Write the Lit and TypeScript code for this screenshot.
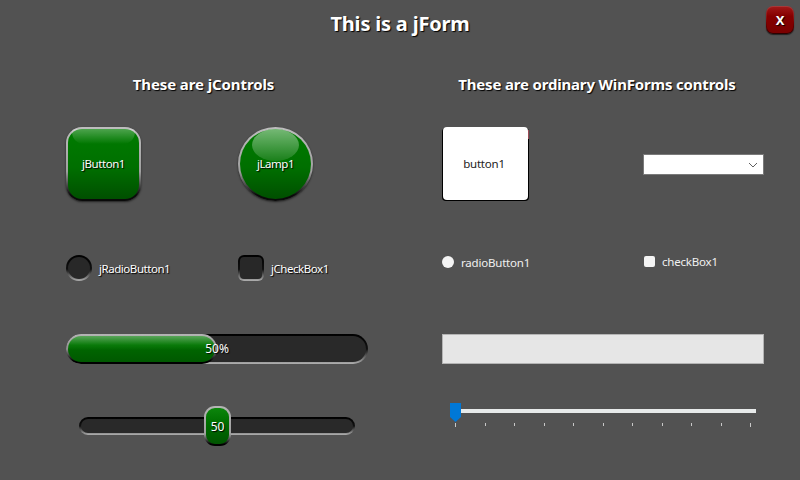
import { css, html, LitElement } from "lit";
import { customElement } from "lit/decorators.js";

const TICKS = 11;

@customElement("app-root")
export class AppRoot extends LitElement {
  static styles = css`
    :host {
      display: block;
      width: 800px;
      height: 480px;
      overflow: hidden;
      background: #525252;
      color: #fff;
      font-family: "Noto Sans", "Open Sans", sans-serif;
      font-size: 11.5px;
    }

    .form {
      position: relative;
      height: 480px;
    }

    .title {
      height: 74px;
      padding-top: 10px;
      box-sizing: border-box;
      text-align: center;
      font-size: 20px;
      font-weight: 700;
      letter-spacing: -0.2px;
      line-height: 28px;
      text-shadow: 1px 1px 1px #000;
    }

    .close {
      position: absolute;
      top: 6px;
      left: 766px;
      width: 28px;
      height: 28px;
      box-sizing: border-box;
      padding: 1px;
      border-radius: 7px;
      background: linear-gradient(#a83a3a, #7a0000 60%, #2a0000);
      box-shadow: 0 1px 1px #222;
    }

    .close span {
      display: flex;
      align-items: center;
      justify-content: center;
      height: 100%;
      border-radius: 6px;
      background: linear-gradient(#a01818, #850000 35%, #7a0000);
      font-size: 13px;
      font-weight: 700;
      text-shadow: 1px 1px 1px #000;
    }

    .columns {
      display: grid;
      grid-template-columns: 302px 322px;
      column-gap: 74px;
      padding-left: 66px;
    }

    .heading {
      height: 20px;
      line-height: 20px;
      font-size: 15px;
      font-weight: 700;
      letter-spacing: -0.1px;
      text-align: center;
      text-shadow: 1px 1px 1px #000;
    }

    .left .heading {
      margin-right: 27px;
    }

    .right .heading {
      margin-right: 12px;
      letter-spacing: -0.18px;
    }

    .row {
      display: grid;
    }

    .left .row {
      grid-template-columns: 172px 1fr;
    }

    .right .row {
      grid-template-columns: 201px 1fr;
    }

    .row-1 {
      margin-top: 33px;
      height: 74px;
    }

    .row-2 {
      margin-top: 54px;
      height: 26px;
    }

    .row-3 {
      margin-top: 53px;
      height: 30px;
    }

    .row-4 {
      margin-top: 42px;
      height: 40px;
    }

    .shadow-text {
      text-shadow: 1px 1px 1px #000;
    }

    .narrow {
      letter-spacing: -0.45px;
    }

    .jbutton,
    .jlamp {
      position: relative;
      width: 75px;
      height: 74px;
      box-sizing: border-box;
      padding: 2px;
      background: linear-gradient(#bdbdbd, #a0a0a0 60%, #0a0a0a 92%);
      box-shadow: 0 1px 2px #222;
    }

    .jbutton {
      border-radius: 16px;
    }

    .jlamp {
      border-radius: 50%;
    }

    .face {
      display: flex;
      align-items: center;
      justify-content: center;
      height: 100%;
      background: linear-gradient(#007c00, #006f00 55%, #004f00);
      border-radius: inherit;
    }

    .jbutton .face {
      border-radius: 14px;
    }

    .jlamp .face {
      border-radius: 50%;
    }

    .gloss {
      position: absolute;
      pointer-events: none;
    }

    .jbutton .gloss {
      top: 2px;
      left: 6px;
      right: 6px;
      height: 15px;
      border-radius: 3px 3px 12px 12px;
      background: linear-gradient(rgba(255, 255, 255, 0.3), rgba(255, 255, 255, 0));
    }

    .jlamp .gloss {
      top: 2px;
      left: 14px;
      width: 47px;
      height: 32px;
      border-radius: 50%;
      background: linear-gradient(rgba(255, 255, 255, 0.46), rgba(255, 255, 255, 0.1));
    }

    .label {
      position: relative;
      margin-top: -1px;
    }

    .toggle {
      display: flex;
      align-items: center;
      gap: 7px;
    }

    .well {
      width: 26px;
      height: 26px;
      box-sizing: border-box;
      padding: 2px;
      background: linear-gradient(#000, #111 55%, #b0b0b0);
    }

    .well.round {
      border-radius: 50%;
    }

    .well.square {
      border-radius: 6px;
    }

    .well div {
      height: 100%;
      background: #282828;
      border-radius: inherit;
    }

    .well.square div {
      border-radius: 4px;
    }

    .jprogress {
      position: relative;
      height: 30px;
      box-sizing: border-box;
      padding: 2px;
      border-radius: 15px;
      background: linear-gradient(#000, #111 50%, #b0b0b0);
    }

    .jprogress .track {
      height: 100%;
      border-radius: 13px;
      background: #292929;
    }

    .jprogress .fill {
      position: absolute;
      top: 0;
      left: 0;
      height: 30px;
      box-sizing: border-box;
      padding: 2px;
      border-radius: 15px;
      background: linear-gradient(#b5b5b5, #909090 50%, #000 90%);
    }

    .jprogress .fill div {
      height: 100%;
      border-radius: 13px;
      background: linear-gradient(#5aa55a, #0a7a0a 35%, #006400 55%, #005800);
    }

    .jprogress .value {
      position: absolute;
      top: 0;
      left: 0;
      right: 0;
      font-size: 12px;
      line-height: 30px;
      text-align: center;
    }

    .jslider {
      position: relative;
      display: flex;
      align-items: center;
      margin: 0 13px;
      height: 40px;
    }

    .jslider .track {
      flex: 1;
      height: 18px;
      box-sizing: border-box;
      padding: 2px;
      border-radius: 9px;
      background: linear-gradient(#000, #111 50%, #b0b0b0);
    }

    .jslider .track div {
      height: 100%;
      border-radius: 7px;
      background: #292929;
    }

    .jslider .thumb {
      position: absolute;
      top: 0;
      width: 27px;
      height: 40px;
      box-sizing: border-box;
      padding: 2px;
      border-radius: 11px;
      background: linear-gradient(#b5b5b5, #a0a0a0 70%, #000 95%);
    }

    .jslider .thumb div {
      display: flex;
      align-items: center;
      justify-content: center;
      height: 100%;
      border-radius: 9px;
      background: linear-gradient(#0c860c, #006f00 40%, #005400);
      font-size: 12px;
    }

    .wbutton {
      position: relative;
      margin-left: 1px;
      width: 85px;
      height: 73px;
      box-sizing: border-box;
      padding-right: 3px;
      display: flex;
      align-items: center;
      justify-content: center;
      background: #fff;
      border-radius: 4px;
      color: #222;
      letter-spacing: -0.2px;
      box-shadow: -1px 1px 0 #000, 1px 1px 0 #000;
    }

    .wbutton::after {
      content: "";
      position: absolute;
      top: 3px;
      right: -1px;
      width: 1px;
      height: 9px;
      background: #9a4a55;
    }

    .combo {
      display: flex;
      align-items: center;
      justify-content: flex-end;
      margin-top: 27px;
      height: 21px;
      box-sizing: border-box;
      padding-right: 4px;
      background: #fff;
      border: 1px solid #7a7a7a;
    }

    .wradio,
    .wcheck {
      display: flex;
      align-items: center;
      align-self: start;
      color: #f0f0f0;
      letter-spacing: -0.2px;
    }

    .wradio {
      gap: 7px;
      height: 14px;
    }

    .wradio i {
      width: 12px;
      height: 12px;
      border-radius: 50%;
      background: #f4f4f4;
    }

    .wcheck {
      gap: 7px;
      height: 12px;
      margin-left: 1px;
    }

    .wcheck i {
      width: 11px;
      height: 11px;
      border-radius: 2px;
      background: #f4f4f4;
    }

    .wprogress {
      height: 30px;
      box-sizing: border-box;
      background: #e6e6e6;
      border: 1px solid #b4b4b4;
    }

    .wtrack {
      margin: -3px 8px 0 8px;
    }

    .rail {
      position: relative;
      height: 19px;
    }

    .rail .line {
      position: absolute;
      top: 6px;
      left: 0;
      right: 0;
      height: 4px;
      background: #e7eaea;
    }

    .rail .knob {
      position: absolute;
      top: 0;
      left: 0;
      display: block;
    }

    .ticks {
      display: flex;
      justify-content: space-between;
      align-items: flex-start;
      height: 5px;
      margin: 1px 5px 0;
    }

    .ticks i {
      width: 1px;
      height: 3px;
      background: #c8c8c8;
    }

    .ticks i.end {
      height: 4px;
    }
  `;

  protected override render() {
    const progress = 50;
    const slider = 50;
    return html`
      <div class="form">
        <div class="title">This is a jForm</div>
        <div class="close"><span>X</span></div>
        <div class="columns">
          <section class="left">
            <div class="heading">These are jControls</div>
            <div class="row row-1">
              <div class="jbutton">
                <div class="face shadow-text"><span class="label narrow">jButton1</span></div>
                <div class="gloss"></div>
              </div>
              <div class="jlamp">
                <div class="face shadow-text"><span class="label narrow">jLamp1</span></div>
                <div class="gloss"></div>
              </div>
            </div>
            <div class="row row-2">
              <div class="toggle">
                <div class="well round"><div></div></div>
                <span class="shadow-text narrow">jRadioButton1</span>
              </div>
              <div class="toggle">
                <div class="well square"><div></div></div>
                <span class="shadow-text narrow">jCheckBox1</span>
              </div>
            </div>
            <div class="row-3">
              <div class="jprogress">
                <div class="track"></div>
                <div class="fill" style="width: ${progress}%"><div></div></div>
                <div class="value shadow-text">${progress}%</div>
              </div>
            </div>
            <div class="row-4">
              <div class="jslider">
                <div class="track"><div></div></div>
                <div class="thumb shadow-text" style="left: calc(${slider}% - 13px)">
                  <div>${slider}</div>
                </div>
              </div>
            </div>
          </section>
          <section class="right">
            <div class="heading">These are ordinary WinForms controls</div>
            <div class="row row-1">
              <div class="wbutton">button1</div>
              <div class="combo">
                <svg width="12" height="12" viewBox="0 0 12 12" fill="none" stroke="#606060" stroke-width="1">
                  <path d="M2 4l4 4 4-4" />
                </svg>
              </div>
            </div>
            <div class="row row-2">
              <div class="wradio"><i></i><span>radioButton1</span></div>
              <div class="wcheck"><i></i><span>checkBox1</span></div>
            </div>
            <div class="row-3"><div class="wprogress"></div></div>
            <div class="row-4">
              <div class="wtrack">
                <div class="rail">
                  <div class="line"></div>
                  <svg class="knob" width="11" height="19" viewBox="0 0 11 19">
                    <path d="M0 0h11v14l-5.5 5L0 14z" fill="#0078d7" />
                  </svg>
                </div>
                <div class="ticks">
                  ${Array.from(
                    { length: TICKS },
                    (_, i) => html`<i class=${i === 0 || i === TICKS - 1 ? "end" : ""}></i>`,
                  )}
                </div>
              </div>
            </div>
          </section>
        </div>
      </div>
    `;
  }
}
